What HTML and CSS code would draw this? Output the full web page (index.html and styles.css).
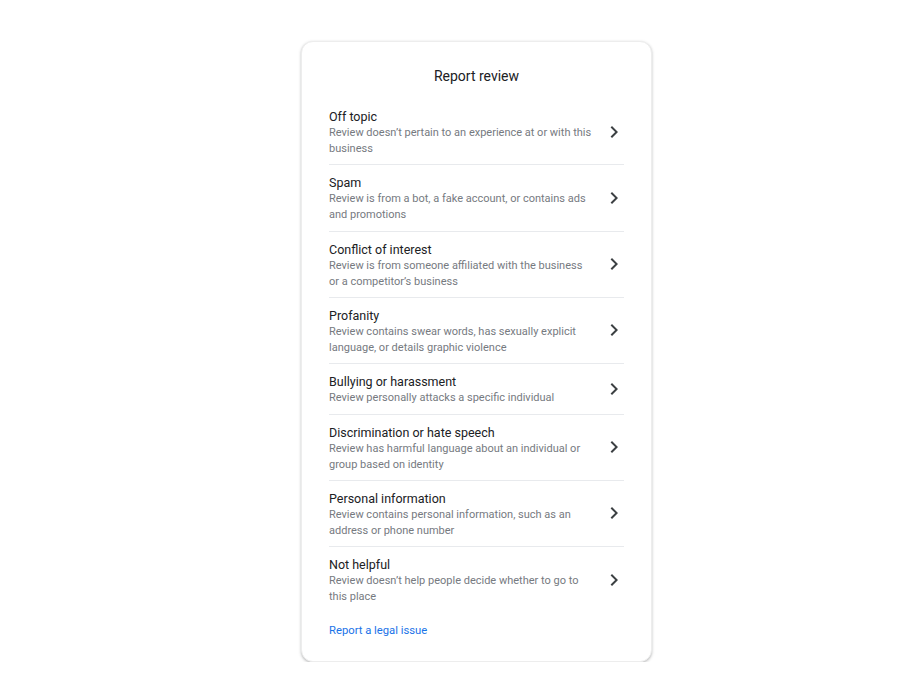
FILE: index.html
```html
<!DOCTYPE html>
<html>
<head>
<meta charset="utf-8">
<link rel="stylesheet" href="styles.css">
</head>
<body>
<div class="page">
  <div class="card">
    <div class="card-title">Report review</div>
    <ul class="list">
      <li class="item">
        <div class="text"><div class="name">Off topic</div><div class="desc">Review doesn’t pertain to an experience at or with this business</div></div>
        <svg class="chev" viewBox="0 0 24 24"><path d="M10 6L8.59 7.41 13.17 12l-4.58 4.59L10 18l6-6z"/></svg>
      </li>
      <li class="item">
        <div class="text"><div class="name">Spam</div><div class="desc">Review is from a bot, a fake account, or contains ads and promotions</div></div>
        <svg class="chev" viewBox="0 0 24 24"><path d="M10 6L8.59 7.41 13.17 12l-4.58 4.59L10 18l6-6z"/></svg>
      </li>
      <li class="item">
        <div class="text"><div class="name">Conflict of interest</div><div class="desc">Review is from someone affiliated with the business or a competitor’s business</div></div>
        <svg class="chev" viewBox="0 0 24 24"><path d="M10 6L8.59 7.41 13.17 12l-4.58 4.59L10 18l6-6z"/></svg>
      </li>
      <li class="item">
        <div class="text"><div class="name">Profanity</div><div class="desc">Review contains swear words, has sexually explicit language, or details graphic violence</div></div>
        <svg class="chev" viewBox="0 0 24 24"><path d="M10 6L8.59 7.41 13.17 12l-4.58 4.59L10 18l6-6z"/></svg>
      </li>
      <li class="item">
        <div class="text"><div class="name">Bullying or harassment</div><div class="desc">Review personally attacks a specific individual</div></div>
        <svg class="chev" viewBox="0 0 24 24"><path d="M10 6L8.59 7.41 13.17 12l-4.58 4.59L10 18l6-6z"/></svg>
      </li>
      <li class="item">
        <div class="text"><div class="name">Discrimination or hate speech</div><div class="desc">Review has harmful language about an individual or group based on identity</div></div>
        <svg class="chev" viewBox="0 0 24 24"><path d="M10 6L8.59 7.41 13.17 12l-4.58 4.59L10 18l6-6z"/></svg>
      </li>
      <li class="item">
        <div class="text"><div class="name">Personal information</div><div class="desc">Review contains personal information, such as an address or phone number</div></div>
        <svg class="chev" viewBox="0 0 24 24"><path d="M10 6L8.59 7.41 13.17 12l-4.58 4.59L10 18l6-6z"/></svg>
      </li>
      <li class="item">
        <div class="text"><div class="name">Not helpful</div><div class="desc">Review doesn’t help people decide whether to go to this place</div></div>
        <svg class="chev" viewBox="0 0 24 24"><path d="M10 6L8.59 7.41 13.17 12l-4.58 4.59L10 18l6-6z"/></svg>
      </li>
    </ul>
    <a class="legal" href="#">Report a legal issue</a>
  </div>
</div>
</body>
</html>
```

FILE: styles.css
```css
html, body {
  margin: 0;
  padding: 0;
  background: #ffffff;
  font-family: Roboto, "Liberation Sans", Arial, sans-serif;
}
.page {
  display: flex;
  justify-content: center;
  padding-top: 41px;
  padding-left: 53px;
}
.card {
  width: 351px;
  box-sizing: border-box;
  padding: 22px 27px 22px;
  border-radius: 12px;
  background: #fff;
  box-shadow: 0 1px 2px rgba(60, 64, 67, 0.25), 0 1px 3px 1px rgba(60, 64, 67, 0.08);
  border: 1px solid #ededed;
}
.card-title {
  text-align: center;
  font-size: 14px;
  line-height: 24px;
  color: #202124;
  margin-bottom: 11px;
}
.list {
  list-style: none;
  margin: 0;
  padding: 0;
}
.item {
  display: flex;
  align-items: center;
  padding: 10px 0 7.33px;
  border-bottom: 1px solid #e8eaed;
}
.item:last-child {
  border-bottom: none;
}
.text {
  flex: 1;
  min-width: 0;
  padding-right: 9.5px;
}
.name {
  font-size: 12.5px;
  line-height: 16px;
  color: #202124;
}
.desc {
  font-size: 11px;
  line-height: 16px;
  color: #767a7f;
}
.chev {
  width: 24px;
  height: 24px;
  flex: none;
  fill: #3c4043;
  margin-right: -2px;
  margin-top: -3px;
}
.legal {
  display: block;
  margin-top: 10px;
  font-size: 11.25px;
  line-height: 16px;
  color: #1a73e8;
  text-decoration: none;
}
```
